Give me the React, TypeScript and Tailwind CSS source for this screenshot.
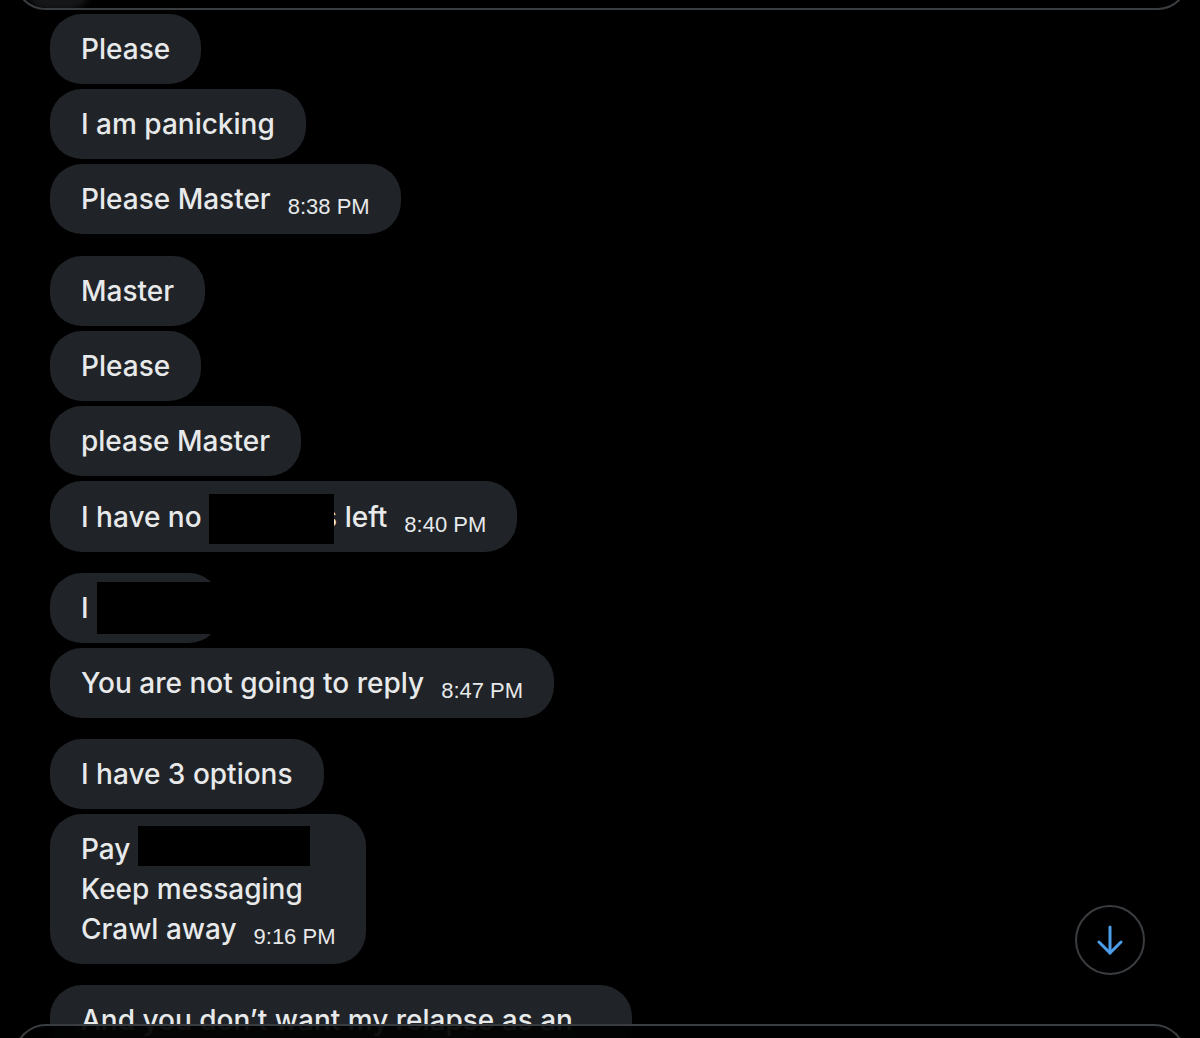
import React from "react";

const core =
  "bg-[#202327] rounded-[32px] text-[#e7e9ea] text-[28px] leading-[40px] font-['Inter'] font-medium";
const base = "w-fit " + core;

function Line({ children, className = "" }: { children: React.ReactNode; className?: string }) {
  return (
    <div className={base + " h-[70px] flex items-center whitespace-nowrap " + className}>
      <span className="leading-[40px]">{children}</span>
    </div>
  );
}

function Time({ t }: { t: string }) {
  return (
    <span className="ml-[17px] font-['Liberation_Sans'] font-normal text-[22px] leading-none align-[-5px] text-[#e7e9ea]">
      {t}
    </span>
  );
}

export default function App() {
  return (
    <div className="relative w-[1200px] h-[1038px] bg-black overflow-hidden">
      <div className="flex flex-col gap-[21px] pt-[14px] pl-[50px]">
        <div className="flex flex-col gap-[5px]">
          <Line className="px-[31px]">Please</Line>
          <Line className="px-[31px]">I am panicking</Line>
          <Line className="px-[31px]">
            Please Master<Time t="8:38 PM" />
          </Line>
        </div>
        <div className="flex flex-col gap-[5px] mt-[1px]">
          <Line className="px-[31px]">Master</Line>
          <Line className="px-[31px]">Please</Line>
          <Line className="px-[31px]">please Master</Line>
          <div className={base + " h-[71px] flex items-center whitespace-nowrap px-[31px]"}>
            <span className="leading-[40px]">
              I have no{" "}
              <span className="relative z-10 inline-block align-middle w-[125px] h-[50px] -my-[10px] bg-black"></span>
              <span className="-ml-[12px]">s</span> left<Time t="8:40 PM" />
            </span>
          </div>
        </div>
        <div className="flex flex-col gap-[5px]">
          <div className={base + " h-[70px] flex items-center pl-[31px] pr-0"}>
            <span>I</span>
            <span className="ml-[8px] block w-[124px] h-[52px] bg-black"></span>
          </div>
          <Line className="px-[31px]">
            You are not going to reply<Time t="8:47 PM" />
          </Line>
        </div>
        <div className="flex flex-col gap-[5px]">
          <Line className="px-[31px]">I have 3 options</Line>
          <div className={base + " px-[31px] py-[15px] whitespace-nowrap"}>
            <div className="h-[40px]">
              Pay{" "}
              <span className="relative -top-[3px] inline-block align-top w-[172px] h-[40px] bg-black"></span>
            </div>
            <div className="h-[40px]">Keep messaging</div>
            <div className="h-[40px]">
              Crawl away<Time t="9:16 PM" />
            </div>
          </div>
        </div>
        <div className="flex flex-col gap-[5px]">
          <div className={core + " w-[582px] px-[31px] py-[15px]"}>
            <div className="h-[40px] whitespace-nowrap">And you don’t want my relapse as an</div>
            <div className="h-[40px]"></div>
          </div>
        </div>
      </div>

      {/* top header overlay */}
      <div className="absolute left-[15px] right-[12px] top-[-60px] h-[70px] rounded-b-[30px] border-2 border-t-0 border-[#3a3d40] bg-black/85 backdrop-blur-md overflow-hidden">
        <div className="absolute left-[10px] top-[30px] w-[62px] h-[40px] rounded-[20px] bg-[#151618] blur-[3px]"></div>
      </div>

      {/* bottom composer overlay */}
      <div className="absolute left-[14px] right-[14px] top-[1024px] h-[80px] rounded-t-[32px] border-2 border-b-0 border-[#3a3d40] bg-black/90 backdrop-blur-md"></div>

      {/* scroll to bottom button */}
      <div className="absolute left-[1075px] top-[905px] w-[70px] h-[70px] rounded-full border-2 border-[#3a3d40] bg-black flex items-center justify-center">
        <svg width="30" height="30" viewBox="0 0 30 30" fill="none" stroke="#4c9ee8" strokeWidth="3" strokeLinecap="round" strokeLinejoin="round">
          <path d="M15 2 V28" />
          <path d="M4 17 L15 28 L26 17" />
        </svg>
      </div>
    </div>
  );
}
